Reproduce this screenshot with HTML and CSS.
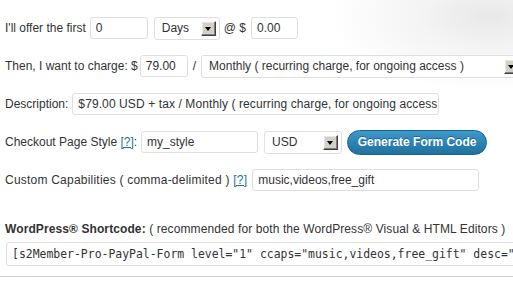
FILE: index.html
```html
<!DOCTYPE html>
<html>
<head>
<meta charset="utf-8">
<link rel="stylesheet" href="styles.css">
</head>
<body>
<div class="page">
  <div class="row">
    <span class="lbl">I'll offer the first</span>
    <div class="field w-trial">0</div>
    <div class="sel w-days ml2"><span class="sel-text">Days</span><span class="arrow"></span></div>
    <span class="lbl">@ $</span>
    <div class="field w-amt ml1">0.00</div>
  </div>
  <div class="row row-tight">
    <span class="lbl">Then, I want to charge: $</span>
    <div class="field w-charge">79.00</div>
    <span class="lbl slash">/</span>
    <div class="sel w-period"><span class="sel-text">Monthly ( recurring charge, for ongoing access )</span><span class="arrow"></span></div>
  </div>
  <div class="row">
    <span class="lbl">Description:</span>
    <div class="field w-desc">$79.00 USD + tax / Monthly ( recurring charge, for ongoing access )</div>
  </div>
  <div class="row">
    <span class="lbl">Checkout Page Style <a class="help">[?]</a>:</span>
    <div class="field w-style">my_style</div>
    <div class="sel w-cur ml2"><span class="sel-text">USD</span><span class="arrow"></span></div>
    <button class="btn ml1">Generate Form Code</button>
  </div>
  <div class="row">
    <span class="lbl wide">Custom Capabilities ( comma-delimited ) <a class="help">[?]</a></span>
    <div class="field w-caps ml1">music,videos,free_gift</div>
  </div>
  <div class="heading"><b>WordPress® Shortcode:</b> ( recommended for both the WordPress® Visual &amp; HTML Editors )</div>
  <div class="code">[s2Member-Pro-PayPal-Form level="1" ccaps="music,videos,free_gift" desc="$79.00 USD + tax / Monthly ( recurring charge, for ongoing access )" ps="my_style" cc="USD" /]</div>
  <div class="rule"></div>
</div>
</body>
</html>
```
FILE: styles.css
```css
html, body {
  margin: 0;
  padding: 0;
}
body {
  width: 513px;
  height: 289px;
  overflow: hidden;
  background: radial-gradient(ellipse 160px 75px at 490px 16px, #e8e8e8 0%, #f4f4f4 45%, #ffffff 100%);
  font-family: "Liberation Sans", Arial, sans-serif;
  font-size: 12px;
  color: #333;
}
.page {
  padding: 17px 0 0 5px;
}
.row {
  display: flex;
  align-items: center;
  gap: 4px;
  height: 22px;
  margin-bottom: 16px;
  white-space: nowrap;
}
.row-tight {
  gap: 2px;
}
.lbl {
  line-height: 16px;
}
.wide {
  letter-spacing: 0.22px;
}
.slash {
  margin: 0 3px 0 3px;
}
.ml1 { margin-left: 1px; }
.ml2 { margin-left: 2px; }
.help {
  color: #21759b;
  text-decoration: underline;
}
.field {
  box-sizing: border-box;
  height: 22px;
  border: 1px solid #dfdfdf;
  border-radius: 3px;
  background: #fff;
  padding: 0 5px;
  line-height: 20px;
  font-size: 12px;
  color: #333;
  overflow: hidden;
  white-space: nowrap;
  flex: none;
}
.w-trial { width: 58px; }
.w-amt { width: 47px; }
.w-charge { width: 48px; }
.w-desc { width: 367px; letter-spacing: 0.1px; }
.w-style { width: 117px; }
.w-caps { width: 227px; letter-spacing: 0; }
.sel {
  box-sizing: border-box;
  height: 23px;
  border: 1px solid #dfdfdf;
  border-radius: 3px;
  background: #fff;
  display: flex;
  align-items: center;
  padding: 0 3px 0 7px;
  flex: none;
}
.sel-text {
  flex: 1;
  overflow: hidden;
  white-space: nowrap;
}
.w-days { width: 66px; }
.w-period { width: 322px; }
.w-cur { width: 78px; }
.arrow {
  box-sizing: border-box;
  width: 15px;
  height: 15px;
  flex: none;
  background: #d4d0c8;
  border-top: 1px solid #ffffff;
  border-left: 1px solid #ffffff;
  border-right: 1px solid #404040;
  border-bottom: 1px solid #404040;
  box-shadow: inset -1px -1px 0 #808080, inset 1px 1px 0 #e8e6e1;
  position: relative;
}
.arrow::after {
  content: "";
  position: absolute;
  left: 3px;
  top: 5px;
  border-left: 3.5px solid transparent;
  border-right: 3.5px solid transparent;
  border-top: 4px solid #000;
}
.btn {
  box-sizing: border-box;
  width: 140px;
  height: 25px;
  border: 1px solid #1d6289;
  border-radius: 13px;
  background: linear-gradient(#3d9acb, #2c84b5 50%, #21719e);
  color: #fff;
  font-family: "Liberation Sans", Arial, sans-serif;
  font-size: 12px;
  font-weight: bold;
  padding: 0;
  text-shadow: 0 -1px 0 rgba(0,0,0,0.3);
  flex: none;
}
.heading {
  margin-top: 30px;
  line-height: 16px;
  white-space: nowrap;
  letter-spacing: 0.1px;
}
.heading b {
  font-weight: bold;
}
.code {
  box-sizing: border-box;
  margin: 5px 0 0 1px;
  width: 530px;
  height: 24px;
  border: 1px solid #dfdfdf;
  border-radius: 3px;
  background: #fff;
  padding: 0 5px;
  line-height: 22px;
  font-family: "DejaVu Sans Mono", "Liberation Mono", monospace;
  font-size: 11.45px;
  color: #333;
  white-space: nowrap;
  overflow: hidden;
}
.rule {
  margin: 10px 0 0 -5px;
  height: 0;
  border-top: 1px solid #d0d0d0;
  width: 513px;
}
```
